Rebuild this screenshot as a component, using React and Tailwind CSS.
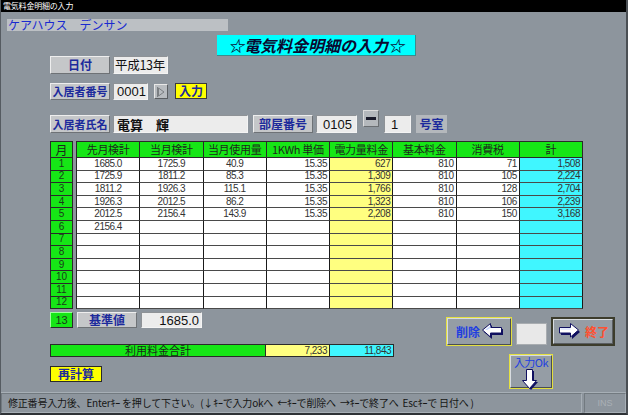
import React from "react";

const JP = "font-['Noto_Sans_CJK_JP',sans-serif]";
const NUM = "font-['Liberation_Sans',sans-serif]";

const LABEL =
  "flex items-center justify-center whitespace-nowrap bg-[#c5c7c9] border border-t-[#eeeeee] border-l-[#eeeeee] border-b-[#6e7276] border-r-[#6e7276] text-[#1c2a9c] font-bold leading-none";
const FIELD =
  "flex items-center whitespace-nowrap bg-[#ececec] border border-t-[#8e9296] border-l-[#8e9296] border-b-[#f4f4f4] border-r-[#f4f4f4] text-[#111111] leading-none";

const rows = [
  ["1685.0", "1725.9", "40.9", "15.35", "627", "810", "71", "1,508"],
  ["1725.9", "1811.2", "85.3", "15.35", "1,309", "810", "105", "2,224"],
  ["1811.2", "1926.3", "115.1", "15.35", "1,766", "810", "128", "2,704"],
  ["1926.3", "2012.5", "86.2", "15.35", "1,323", "810", "106", "2,239"],
  ["2012.5", "2156.4", "143.9", "15.35", "2,208", "810", "150", "3,168"],
  ["2156.4", "", "", "", "", "", "", ""],
  ["", "", "", "", "", "", "", ""],
  ["", "", "", "", "", "", "", ""],
  ["", "", "", "", "", "", "", ""],
  ["", "", "", "", "", "", "", ""],
  ["", "", "", "", "", "", "", ""],
  ["", "", "", "", "", "", "", ""],
];

const headers = ["先月検計", "当月検計", "当月使用量", "1KWh 単価", "電力量料金", "基本料金", "消費税", "計"];

const cellBg = ["bg-white", "bg-white", "bg-white", "bg-white", "bg-[#ffff80]", "bg-white", "bg-white", "bg-[#40f6ff]"];
const cellAlign = ["justify-center", "justify-center", "justify-center", "justify-end pr-[2px]", "justify-end pr-[2px]", "justify-end pr-[2px]", "justify-end pr-[2px]", "justify-end pr-[2px]"];

function ArrowLeft() {
  return (
    <svg width="22" height="17" viewBox="0 0 22 17">
      <polygon points="2,9 10,2 10,6 21,6 21,12 10,12 10,16" fill="#101060" />
      <polygon points="0.5,7 8.5,0.5 8.5,4.5 19.5,4.5 19.5,10 8.5,10 8.5,14" fill="#ffffff" stroke="#101060" strokeWidth="1" />
      <polygon points="3,7 8.5,2.5 8.5,5 5,7" fill="#c8d8ff" />
    </svg>
  );
}

function ArrowRight() {
  return (
    <svg width="22" height="17" viewBox="0 0 22 17">
      <polygon points="21,9 13,2 13,6 2,6 2,12 13,12 13,16" fill="#101060" />
      <polygon points="19.5,7 11.5,0.5 11.5,4.5 0.5,4.5 0.5,10 11.5,10 11.5,14" fill="#ffffff" stroke="#101060" strokeWidth="1" />
      <polygon points="1.5,5.5 11.5,5.5 11.5,6.5 1.5,6.5" fill="#c8d8ff" />
    </svg>
  );
}

function ArrowDown() {
  return (
    <svg width="18" height="22" viewBox="0 0 18 22">
      <polygon points="9,21 2,13 6,13 6,2 12,2 12,13 16,13" fill="#101060" />
      <polygon points="7.5,19.5 0.5,11.5 4.5,11.5 4.5,0.5 10.5,0.5 10.5,11.5 14.5,11.5" fill="#ffffff" stroke="#101060" strokeWidth="1" />
    </svg>
  );
}

export default function App() {
  return (
    <div className={`w-[628px] h-[415px] bg-[#8d959d] flex flex-col overflow-hidden border-l border-l-[#555b61] border-r-2 border-r-[#4a4f54] border-b-2 border-b-[#2e3236] ${JP}`}>
      {/* title bar */}
      <div className="h-[12px] bg-black text-white text-[8px] leading-[12px] pl-[2px] tracking-[-0.2px]">電気料金明細の入力</div>

      {/* facility name */}
      <div className="mt-[7px] ml-[6px] w-[221px] h-[12px] bg-[#bcc0c4] text-[#1a2ad0] text-[12px] leading-[12px] pl-[1px] whitespace-nowrap">ケアハウス　デンサン</div>

      {/* main title */}
      <div className="mt-[4px] ml-[216px] w-[199px] h-[21px] bg-[#00ffff] border-b border-r border-[#3a8c8c] flex items-center justify-center text-[#0a0a30] text-[16px] font-bold italic leading-none whitespace-nowrap">
        ☆電気料金明細の入力☆
      </div>

      {/* date row */}
      <div className="flex ml-[49px]">
        <div className={`${LABEL} w-[60px] h-[18px] text-[12px]`}>日付</div>
        <div className={`${FIELD} ml-[3px] w-[55px] h-[18px] pl-[1px] text-[12.5px] tracking-[-0.3px]`}>平成13年</div>
      </div>

      {/* resident number row */}
      <div className="flex items-start ml-[49px] mt-[9px]">
        <div className={`${LABEL} w-[60px] h-[17px] text-[11px]`}>入居者番号</div>
        <div className={`${FIELD} ml-[3px] w-[35px] h-[17px] pl-[3px] text-[13px] ${NUM}`}>0001</div>
        <div className="ml-[6px] mt-[1px] w-[14px] h-[15px] bg-[#b8bcc0] border border-t-[#e8e8e8] border-l-[#e8e8e8] border-b-[#5a5e62] border-r-[#5a5e62] flex items-center justify-center">
          <svg width="8" height="10" viewBox="0 0 8 10">
            <line x1="0.5" y1="0" x2="0.5" y2="10" stroke="#7a7e82" strokeWidth="1" />
            <polygon points="1.5,1 7,5 1.5,9" fill="none" stroke="#7a7e82" strokeWidth="1" />
          </svg>
        </div>
        <div className="ml-[7px] w-[32px] h-[16px] bg-[#ffff00] border border-[#3a3a3a] flex items-center justify-center text-[#1c2a9c] font-bold text-[12px] leading-none whitespace-nowrap">入力</div>
      </div>

      {/* resident name row */}
      <div className="flex items-start ml-[49px] mt-[15px]">
        <div className={`${LABEL} w-[60px] h-[18px] text-[11px]`}>入居者氏名</div>
        <div className={`${FIELD} ml-[3px] w-[135px] h-[18px] pl-[3px] text-[13px] font-bold`}>電算　輝</div>
        <div className={`${LABEL} ml-[5px] w-[60px] h-[18px] text-[12px]`}>部屋番号</div>
        <div className={`${FIELD} ml-[3px] w-[41px] h-[18px] pl-[6px] text-[13px] ${NUM}`}>0105</div>
        <div className="ml-[6px] -mt-[5px] w-[16px] h-[17px] bg-[#b4b8bc] border border-t-[#dcdcdc] border-l-[#dcdcdc] border-b-[#6a6e72] border-r-[#6a6e72] flex items-center justify-center">
          <div className="w-[10px] h-[3px] bg-[#1a1a2a]" />
        </div>
        <div className={`${FIELD} ml-[5px] w-[27px] h-[18px] pl-[6px] text-[13px] ${NUM}`}>1</div>
        <div className="ml-[5px] w-[31px] h-[18px] bg-[#b4b8bc] flex items-center justify-center text-[#1c2a9c] font-bold text-[12px] leading-none whitespace-nowrap">号室</div>
      </div>

      {/* table */}
      <div className="flex ml-[49px] mt-[8px]">
        <div className="w-[23px] flex flex-col border-l border-t border-[#2a2a2a]">
          <div className="h-[16px] bg-[#16e616] border-b border-r border-[#2a2a2a] flex items-center justify-center text-[12px] leading-none text-[#1a2a1a]">月</div>
          {rows.map((_, i) => (
            <div key={i} className={`h-[12.6px] bg-[#16e616] border-b border-r border-[#2a2a2a] flex items-center justify-center text-[10px] leading-none text-[#1a3a1a] ${NUM}`}>
              {i + 1}
            </div>
          ))}
        </div>
        <div className="ml-[3px] w-[507px] border-l border-t border-[#2a2a2a]">
          <div className="grid grid-cols-8 h-[16px]">
            {headers.map((h, i) => (
              <div key={i} className="bg-[#16e616] border-b border-r border-[#2a2a2a] flex items-center justify-center text-[11px] leading-none text-[#1c2a1c] tracking-[-0.3px] whitespace-nowrap">
                {h}
              </div>
            ))}
          </div>
          {rows.map((r, ri) => (
            <div key={ri} className="grid grid-cols-8 h-[12.6px]">
              {r.map((v, ci) => (
                <div key={ci} className={`${cellBg[ci]} ${cellAlign[ci]} border-b border-b-[#4a4a4a] border-r border-r-[#1a1a1a] flex items-center text-[10px] leading-none text-[#333333] tracking-[-0.5px] ${NUM}`}>
                  {v}
                </div>
              ))}
            </div>
          ))}
        </div>
      </div>

      {/* lower area */}
      <div className="flex ml-[49px]">
        <div className="flex flex-col w-[344px]">
          <div className="flex mt-[3px] h-[16px]">
            <div className={`w-[23px] bg-[#16e616] border border-t-[#a0ffa0] border-l-[#a0ffa0] border-b-[#2a2a2a] border-r-[#2a2a2a] flex items-center justify-center text-[11px] leading-none text-[#1a3a1a] ${NUM}`}>13</div>
            <div className={`${LABEL} ml-[4px] w-[60px] h-[16px] text-[12px]`}>基準値</div>
            <div className={`${FIELD} ml-[4px] w-[61px] h-[16px] justify-end pr-[2px] text-[13px] ${NUM}`}>1685.0</div>
          </div>
          <div className="mt-[16px] h-[13px] flex border border-[#2a2a2a]">
            <div className="w-[215px] bg-[#16e616] border-r border-[#2a2a2a] flex items-center justify-center text-[11px] leading-none text-[#1a2a1a] whitespace-nowrap">利用料金合計</div>
            <div className={`w-[64px] bg-[#ffff80] border-r border-[#2a2a2a] flex items-center justify-end pr-[2px] text-[10px] leading-none text-[#333333] tracking-[-0.5px] ${NUM}`}>7,233</div>
            <div className={`flex-1 bg-[#40f6ff] flex items-center justify-end pr-[2px] text-[10px] leading-none text-[#333333] tracking-[-0.5px] ${NUM}`}>11,843</div>
          </div>
          <div className="mt-[9px] w-[52px] h-[16px] bg-[#ffff00] border border-[#2a2a2a] flex items-center justify-center text-[#1c2a9c] font-bold text-[12px] leading-none whitespace-nowrap">再計算</div>
        </div>

        <div className="ml-[52px] mt-[8px] flex flex-col">
          <div className="flex items-end">
            <div className="w-[66px] h-[29px] border border-[#e4e040]">
              <div className="w-full h-full bg-[#959da5] border border-t-[#d8dce0] border-l-[#d8dce0] border-b-[#4a4e52] border-r-[#4a4e52] flex items-center pl-[8px] gap-[2px]">
                <span className="text-[#1f3fe0] font-bold text-[12px] leading-none whitespace-nowrap">削除</span>
                <ArrowLeft />
              </div>
            </div>
            <div className="ml-[4px] w-[31px] h-[22px] bg-[#e8e8e8] border border-[#a8acb0] mb-[1px]" />
            <div className="ml-[4px] w-[64px] h-[29px] border-2 border-[#3c3c2c]">
              <div className="w-full h-full bg-[#959da5] border border-t-[#d8dce0] border-l-[#d8dce0] border-b-[#5a5e62] border-r-[#5a5e62] flex items-center pl-[5px] gap-[4px]">
                <ArrowRight />
                <span className="text-[#ff5030] font-bold text-[12px] leading-none whitespace-nowrap">終了</span>
              </div>
            </div>
          </div>
          <div className="mt-[8px] ml-[63px] w-[44px] h-[35px] border border-[#e4e040]">
            <div className="w-full h-full bg-[#959da5] border border-t-[#d8dce0] border-l-[#d8dce0] border-b-[#4a4e52] border-r-[#4a4e52] flex flex-col items-center pt-[1px]">
              <span className="text-[#2040e0] text-[11px] leading-none tracking-[-0.5px] whitespace-nowrap">入力Ok</span>
              <div className="mt-[1px]">
                <ArrowDown />
              </div>
            </div>
          </div>
        </div>
      </div>

      {/* status bar */}
      <div className="mt-auto h-[21px] flex border-t border-[#a7afb6]">
        <div className="flex-1 flex items-center pl-[6px] border border-t-[#727a80] border-l-[#727a80] border-b-[#a7afb6] border-r-[#a7afb6] text-[10px] leading-none text-[#151515] whitespace-pre overflow-hidden tracking-[-0.2px]">
          {"修正番号入力後、Enterｷｰ を押して下さい。(↓ｷｰで入力okへ  ←ｷｰで削除へ  →ｷｰで終了へ  Escｷｰで 日付へ )"}
        </div>
        <div className={`ml-[2px] w-[42px] flex items-center justify-center border border-t-[#727a80] border-l-[#727a80] border-b-[#a7afb6] border-r-[#a7afb6] text-[9px] leading-none text-[#aab0b6] ${NUM}`}>INS</div>
      </div>
    </div>
  );
}
